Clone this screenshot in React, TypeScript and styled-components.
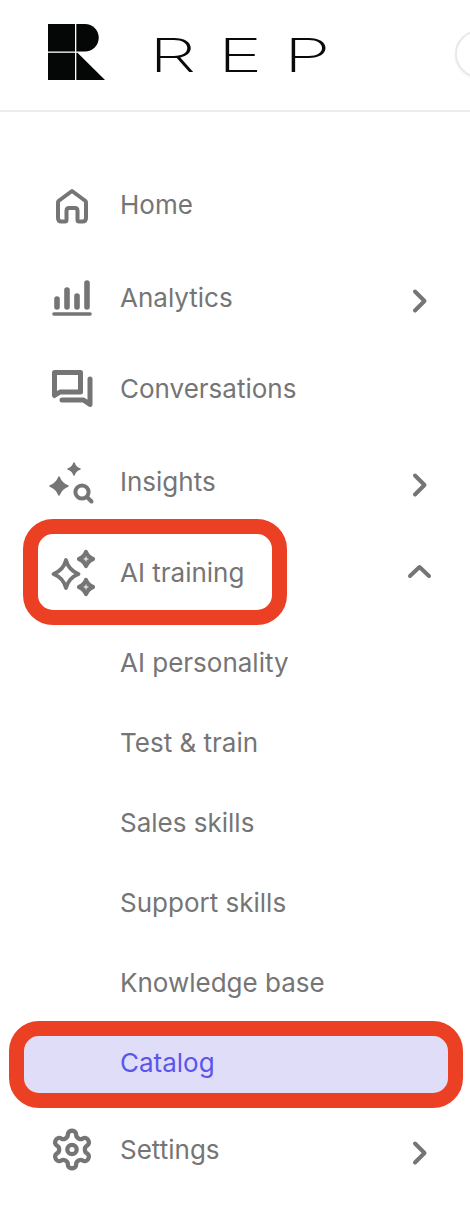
import React from "react";
import styled, { createGlobalStyle } from "styled-components";

const Global = createGlobalStyle`
  html, body { margin: 0; padding: 0; background: #fff; overflow: hidden; }
  * { box-sizing: border-box; }
`;

const Page = styled.div`
  width: 470px;
  height: 1208px;
  overflow: hidden;
  background: #fff;
  font-family: "Inter", "Lato", sans-serif;
`;

const Header = styled.header`
  height: 112px;
  border-bottom: 2px solid #ececec;
  display: flex;
  align-items: flex-start;
  overflow: hidden;
`;

const LogoMark = styled.svg`
  width: 58px;
  height: 57px;
  margin: 24px 0 0 48px;
  flex-shrink: 0;
`;

const Wordmark = styled.span`
  display: block;
  margin: 27px 0 0 43px;
  width: 190px;
  flex-shrink: 0;
  font-family: "Inter", sans-serif;
  font-weight: 200;
  font-size: 47px;
  line-height: 56px;
  letter-spacing: 13.3px;
  color: #0a0a0a;
  transform: scaleX(1.61);
  transform-origin: left center;
  white-space: nowrap;
`;

const SearchEdge = styled.div`
  width: 48px;
  height: 48px;
  margin: 30px 0 0 116px;
  flex-shrink: 0;
  border-radius: 50%;
  border: 2px solid #e9e9e9;
  box-shadow: 0 1px 3px rgba(0, 0, 0, 0.06);
  background: #fff;
`;

const Nav = styled.nav`
  display: flex;
  flex-direction: column;
  padding-top: 57px;
`;

const Row = styled.div<{ $gap?: number }>`
  height: 70px;
  margin-top: ${(p) => p.$gap ?? 0}px;
  display: flex;
  align-items: center;
  position: relative;
`;

const IconSlot = styled.div`
  width: 120px;
  height: 70px;
  flex-shrink: 0;
`;

const Label = styled.span<{ $active?: boolean }>`
  font-size: 26px;
  line-height: 34px;
  padding-top: 1px;
  color: ${(p) => (p.$active ? "#5b55ec" : "#757575")};
  white-space: nowrap;
`;

const ChevronSlot = styled.svg<{ $top: number }>`
  position: absolute;
  left: 400px;
  top: ${(p) => p.$top}px;
  width: 40px;
  height: 40px;
`;

const RingRow = styled.div`
  width: 264px;
  height: 106px;
  margin: 3px 0 0 23px;
  border: 15px solid #ec4025;
  border-radius: 30px;
  background: #fff;
  display: flex;
  align-items: center;
`;

const RingIcon = styled.div`
  width: 82px;
  height: 76px;
  flex-shrink: 0;
`;

const Wrap = styled.div`
  position: relative;
`;

const SubRow = styled.div<{ $gap?: number }>`
  height: 70px;
  margin-top: ${(p) => p.$gap ?? 10}px;
  padding-left: 120px;
  display: flex;
  align-items: center;
`;

const ActiveRow = styled.div`
  width: 454px;
  height: 87px;
  margin: 4px 0 0 9px;
  border: 15px solid #ec4025;
  border-radius: 30px;
  background: #e0ddf9;
  background-clip: padding-box;
  padding: 0 0 5px 96px;
  display: flex;
  align-items: center;
`;

const Icon = styled.svg`
  display: block;
  width: 100%;
  height: 100%;
  fill: none;
  stroke: #757575;
  stroke-width: 4;
  stroke-linecap: round;
  stroke-linejoin: round;
`;

const HomeIcon = () => (
  <Icon viewBox="0 169 120 70">
    <path d="M72 191 L85.5 201 Q86 201.5 86 203 V218 Q86 221.5 82.5 221.5 H79 Q77.5 221.5 77.5 220 V211 Q77.5 208 75 208 H69 Q66.5 208 66.5 211 V220 Q66.5 221.5 65 221.5 H61.5 Q58 221.5 58 218 V203 Q58 201.5 58.5 201 Z" />
  </Icon>
);

const AnalyticsIcon = () => (
  <Icon viewBox="0 262 120 70">
    <g strokeWidth="5.6">
      <path d="M57 299 V307" />
      <path d="M67 290 V307" />
      <path d="M77 296 V307" />
      <path d="M87 283 V307" />
    </g>
    <path d="M54 314 H90" strokeWidth="3.6" />
  </Icon>
);

const ConversationsIcon = () => (
  <Icon viewBox="0 353 120 70">
    <path d="M54.5 372.5 H80.5 V392 H60 L54.5 395.5 Z" strokeWidth="5" />
    <path d="M90 379 V404.5 L83.5 400 H62" strokeWidth="5" />
  </Icon>
);

const InsightsIcon = () => (
  <Icon viewBox="0 446 120 70">
    <path d="M59 477 Q61.5 483.5 68 486 Q61.5 488.5 59 495 Q56.5 488.5 50 486 Q56.5 483.5 59 477 Z" strokeWidth="1.5" style={{ fill: "#757575" }} />
    <path d="M74 463 Q75.5 467.5 80 469 Q75.5 470.5 74 475 Q72.5 470.5 68 469 Q72.5 467.5 74 463 Z" strokeWidth="1.5" style={{ fill: "#757575" }} />
    <circle cx="82" cy="492" r="6.6" />
    <path d="M87 497 L91.5 501.5" />
  </Icon>
);

const AiIcon = () => (
  <Icon viewBox="0 0 82 76">
    <path d="M28 26 Q30.5 36 40.5 40 Q30.5 44 28 54 Q25.5 44 15.5 40 Q25.5 36 28 26 Z" strokeWidth="3.8" />
    <path d="M48 18 Q50 23 55 25 Q50 27 48 32 Q46 27 41 25 Q46 23 48 18 Z" strokeWidth="4.2" style={{ fill: "#757575" }} />
    <path d="M48 46 Q50 51 55 53 Q50 55 48 60 Q46 55 41 53 Q46 51 48 46 Z" strokeWidth="4.2" style={{ fill: "#757575" }} />
    <path d="M48 23 V27 M46 25 H50" strokeWidth="1" style={{ stroke: "#fff" }} />
    <path d="M48 51 V55 M46 53 H50" strokeWidth="1" style={{ stroke: "#fff" }} />
  </Icon>
);

const SettingsIcon = () => (
  <Icon viewBox="0 1114 120 70">
    <g transform="translate(49.5 1127) scale(1.875)" strokeWidth="2.3">
      <path d="M12.22 2h-.44a2 2 0 0 0-2 2v.18a2 2 0 0 1-1 1.73l-.43.25a2 2 0 0 1-2 0l-.15-.08a2 2 0 0 0-2.73.73l-.22.38a2 2 0 0 0 .73 2.73l.15.1a2 2 0 0 1 1 1.72v.51a2 2 0 0 1-1 1.74l-.15.09a2 2 0 0 0-.73 2.73l.22.38a2 2 0 0 0 2.73.73l.15-.08a2 2 0 0 1 2 0l.43.25a2 2 0 0 1 1 1.73V20a2 2 0 0 0 2 2h.44a2 2 0 0 0 2-2v-.18a2 2 0 0 1 1-1.73l.43-.25a2 2 0 0 1 2 0l.15.08a2 2 0 0 0 2.73-.73l.22-.39a2 2 0 0 0-.73-2.73l-.15-.08a2 2 0 0 1-1-1.74v-.5a2 2 0 0 1 1-1.74l.15-.09a2 2 0 0 0 .73-2.73l-.22-.38a2 2 0 0 0-2.73-.73l-.15.08a2 2 0 0 1-2 0l-.43-.25a2 2 0 0 1-1-1.73V4a2 2 0 0 0-2-2z" />
      <circle cx="12" cy="12" r="2.5" />
    </g>
  </Icon>
);

const ChevronRight = () => (
  <ChevronSlot $top={17} viewBox="0 0 40 40" fill="none" stroke="#757575" strokeWidth="4" strokeLinecap="round" strokeLinejoin="round">
    <path d="M15 12.5 L24.5 22 L15 31.5" />
  </ChevronSlot>
);

const ChevronUp = () => (
  <ChevronSlot $top={33} viewBox="0 0 40 40" fill="none" stroke="#757575" strokeWidth="4" strokeLinecap="round" strokeLinejoin="round">
    <path d="M10 27 L19.5 18 L29 27" />
  </ChevronSlot>
);

const subItems = ["AI personality", "Test & train", "Sales skills", "Support skills", "Knowledge base"];

export default function App() {
  return (
    <Page>
      <Global />
      <Header>
        <LogoMark viewBox="0 0 58 57">
          <path d="M0 0 H27 V27.5 H0 Z" fill="#040706" />
          <path d="M28.3 0 H37 A13.75 13.75 0 0 1 37 27.5 H28.3 Z" fill="#040706" />
          <path d="M0 28.8 H27 V56 H0 Z" fill="#040706" />
          <path d="M28.3 28.8 H29.5 L57 56 H28.3 Z" fill="#040706" />
        </LogoMark>
        <Wordmark>REP</Wordmark>
        <SearchEdge />
      </Header>
      <Nav>
        <Row>
          <IconSlot><HomeIcon /></IconSlot>
          <Label>Home</Label>
        </Row>
        <Row $gap={23}>
          <IconSlot><AnalyticsIcon /></IconSlot>
          <Label>Analytics</Label>
          <ChevronRight />
        </Row>
        <Row $gap={21}>
          <IconSlot><ConversationsIcon /></IconSlot>
          <Label>Conversations</Label>
        </Row>
        <Row $gap={23}>
          <IconSlot><InsightsIcon /></IconSlot>
          <Label>Insights</Label>
          <ChevronRight />
        </Row>
        <Wrap>
          <RingRow>
            <RingIcon><AiIcon /></RingIcon>
            <Label>AI training</Label>
          </RingRow>
          <ChevronUp />
        </Wrap>
        {subItems.map((s, i) => (
          <SubRow key={s} $gap={i === 0 ? 2 : 10}>
            <Label>{s}</Label>
          </SubRow>
        ))}
        <ActiveRow>
          <Label $active>Catalog</Label>
        </ActiveRow>
        <Row $gap={6}>
          <IconSlot><SettingsIcon /></IconSlot>
          <Label>Settings</Label>
          <ChevronRight />
        </Row>
      </Nav>
    </Page>
  );
}
